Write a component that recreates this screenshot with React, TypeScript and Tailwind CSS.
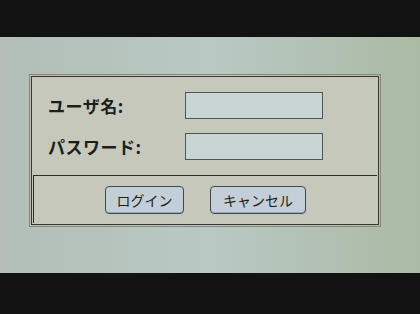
import React from "react";

const jp = "font-['Noto_Sans_CJK_JP','Noto_Sans',sans-serif]";

const Field = ({ label }: { label: string }) => (
  <div className="flex h-[27px] items-center">
    <span className="w-[153px] pl-[16px] text-[17px] font-bold leading-none tracking-[0.5px] text-[#1c1e1c]">
      {label}
    </span>
    <input
      type="text"
      className="h-[27px] w-[138px] border border-[#4b5858] bg-[#c9d5d5] outline-none"
    />
  </div>
);

const Btn = ({ label, w }: { label: string; w: string }) => (
  <button
    className={`${w} h-[28px] rounded-[4px] border border-[#3c4a58] bg-[#c3ced6] text-[14px] leading-none text-[#1c1e22] shadow-[inset_0_-1px_0_#9aa6b0]`}
  >
    {label}
  </button>
);

export default function App() {
  return (
    <div className={`h-[314px] w-[420px] bg-[#121212] pt-[37px] ${jp}`}>
      <div className="h-[236px] bg-gradient-to-r from-[#b2beb6] via-[#bac8c4] to-[#abbaa4] pl-[29px] pt-[37px]">
        <div className="w-[352px] border border-[#8c8676] p-px">
          <div className="border border-[#3a3731] bg-[#c6c8bc]">
            <div className="flex flex-col gap-[14px] py-[15px]">
              <Field label="ユーザ名:" />
              <Field label="パスワード:" />
            </div>
            <div className="mx-px mb-px flex h-[48px] items-center justify-center gap-[26px] border-l border-t border-[#2e2c28]">
              <Btn label="ログイン" w="w-[79px]" />
              <Btn label="キャンセル" w="w-[96px]" />
            </div>
          </div>
        </div>
      </div>
    </div>
  );
}
